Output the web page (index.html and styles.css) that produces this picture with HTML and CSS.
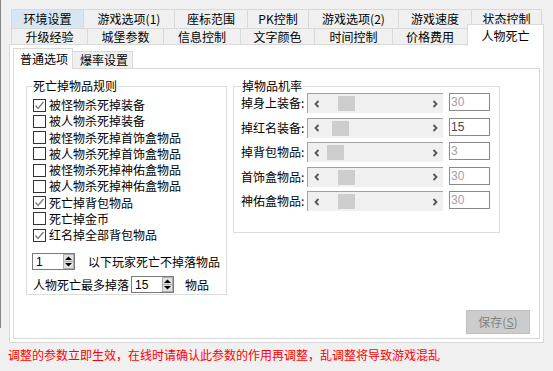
FILE: index.html
```html
<!DOCTYPE html>
<html lang="zh-CN">
<head>
<meta charset="utf-8">
<title>人物死亡</title>
<link rel="stylesheet" href="styles.css">
</head>
<body>
<div class="page">
  <div class="tabrow r1">
    <div class="tab hot w1">环境设置</div>
    <div class="tab w2">游戏选项(1)</div>
    <div class="tab w3">座标范围</div>
    <div class="tab w4">PK控制</div>
    <div class="tab w5">游戏选项(2)</div>
    <div class="tab w6">游戏速度</div>
    <div class="tab w7">状态控制</div>
  </div>
  <div class="tabrow r2">
    <div class="tab v1">升级经验</div>
    <div class="tab v2">城堡参数</div>
    <div class="tab v3">信息控制</div>
    <div class="tab v4">文字颜色</div>
    <div class="tab v5">时间控制</div>
    <div class="tab v6">价格费用</div>
    <div class="tab sel v7">人物死亡</div>
  </div>
  <div class="panel">
    <div class="subtabs">
      <div class="stab ssel">普通选项</div>
      <div class="stab">爆率设置</div>
    </div>
    <div class="inner">
      <div class="groups">
        <fieldset class="group g1">
          <legend>死亡掉物品规则</legend>
          <div class="chk"><span class="box on"><svg viewBox="0 0 11 11" width="11" height="11"><polyline points="1.5,5.5 4,8.5 9.5,2" fill="none" stroke="#7a7a7a" stroke-width="1.3"/></svg></span>被怪物杀死掉装备</div>
          <div class="chk"><span class="box"></span>被人物杀死掉装备</div>
          <div class="chk"><span class="box"></span>被怪物杀死掉首饰盒物品</div>
          <div class="chk"><span class="box"></span>被人物杀死掉首饰盒物品</div>
          <div class="chk"><span class="box"></span>被怪物杀死掉神佑盒物品</div>
          <div class="chk"><span class="box"></span>被人物杀死掉神佑盒物品</div>
          <div class="chk"><span class="box on"><svg viewBox="0 0 11 11" width="11" height="11"><polyline points="1.5,5.5 4,8.5 9.5,2" fill="none" stroke="#7a7a7a" stroke-width="1.3"/></svg></span>死亡掉背包物品</div>
          <div class="chk"><span class="box"></span>死亡掉金币</div>
          <div class="chk"><span class="box on"><svg viewBox="0 0 11 11" width="11" height="11"><polyline points="1.5,5.5 4,8.5 9.5,2" fill="none" stroke="#7a7a7a" stroke-width="1.3"/></svg></span>红名掉全部背包物品</div>
          <div class="spinrow row-a">
            <span class="spin s1"><span class="val">1</span><svg class="updown" viewBox="0 0 11 15" width="11" height="15"><rect x="0.5" y="0.5" width="10" height="14" fill="#e1e1e1" stroke="#adadad"/><line x1="1" y1="7.5" x2="10" y2="7.5" stroke="#adadad"/><polygon points="2,6 9,6 5.5,2.5" fill="#000"/><polygon points="2,9 9,9 5.5,12.5" fill="#000"/></svg></span>
            <span>以下玩家死亡不掉落物品</span>
          </div>
          <div class="spinrow row-b">
            <span>人物死亡最多掉落</span>
            <span class="spin s2"><span class="val">15</span><svg class="updown" viewBox="0 0 11 15" width="11" height="15"><rect x="0.5" y="0.5" width="10" height="14" fill="#e1e1e1" stroke="#adadad"/><line x1="1" y1="7.5" x2="10" y2="7.5" stroke="#adadad"/><polygon points="2,6 9,6 5.5,2.5" fill="#000"/><polygon points="2,9 9,9 5.5,12.5" fill="#000"/></svg></span>
            <span>物品</span>
          </div>
        </fieldset>
        <fieldset class="group g2">
          <legend>掉物品机率</legend>
          <div class="rate">
            <span class="lbl">掉身上装备:</span>
            <span class="scroll"><span class="arr"><svg viewBox="0 0 6 8" width="6" height="8"><polyline points="4.5,1 1.5,4 4.5,7" fill="none" stroke="#555" stroke-width="1.8"/></svg></span><span class="track"><span class="thumb" style="left:13px"></span></span><span class="arr"><svg viewBox="0 0 6 8" width="6" height="8"><polyline points="1.5,1 4.5,4 1.5,7" fill="none" stroke="#555" stroke-width="1.8"/></svg></span></span>
            <span class="edit">30</span>
          </div>
          <div class="rate">
            <span class="lbl">掉红名装备:</span>
            <span class="scroll"><span class="arr"><svg viewBox="0 0 6 8" width="6" height="8"><polyline points="4.5,1 1.5,4 4.5,7" fill="none" stroke="#555" stroke-width="1.8"/></svg></span><span class="track"><span class="thumb" style="left:7px"></span></span><span class="arr"><svg viewBox="0 0 6 8" width="6" height="8"><polyline points="1.5,1 4.5,4 1.5,7" fill="none" stroke="#555" stroke-width="1.8"/></svg></span></span>
            <span class="edit dark">15</span>
          </div>
          <div class="rate">
            <span class="lbl">掉背包物品:</span>
            <span class="scroll"><span class="arr"><svg viewBox="0 0 6 8" width="6" height="8"><polyline points="4.5,1 1.5,4 4.5,7" fill="none" stroke="#555" stroke-width="1.8"/></svg></span><span class="track"><span class="thumb" style="left:2px"></span></span><span class="arr"><svg viewBox="0 0 6 8" width="6" height="8"><polyline points="1.5,1 4.5,4 1.5,7" fill="none" stroke="#555" stroke-width="1.8"/></svg></span></span>
            <span class="edit">3</span>
          </div>
          <div class="rate">
            <span class="lbl">首饰盒物品:</span>
            <span class="scroll"><span class="arr"><svg viewBox="0 0 6 8" width="6" height="8"><polyline points="4.5,1 1.5,4 4.5,7" fill="none" stroke="#555" stroke-width="1.8"/></svg></span><span class="track"><span class="thumb" style="left:13px"></span></span><span class="arr"><svg viewBox="0 0 6 8" width="6" height="8"><polyline points="1.5,1 4.5,4 1.5,7" fill="none" stroke="#555" stroke-width="1.8"/></svg></span></span>
            <span class="edit">30</span>
          </div>
          <div class="rate">
            <span class="lbl">神佑盒物品:</span>
            <span class="scroll"><span class="arr"><svg viewBox="0 0 6 8" width="6" height="8"><polyline points="4.5,1 1.5,4 4.5,7" fill="none" stroke="#555" stroke-width="1.8"/></svg></span><span class="track"><span class="thumb" style="left:13px"></span></span><span class="arr"><svg viewBox="0 0 6 8" width="6" height="8"><polyline points="1.5,1 4.5,4 1.5,7" fill="none" stroke="#555" stroke-width="1.8"/></svg></span></span>
            <span class="edit">30</span>
          </div>
        </fieldset>
      </div>
      <div class="actions">
        <button class="save" type="button" disabled>保存(<u>S</u>)</button>
      </div>
    </div>
  </div>
  <p class="note">调整的参数立即生效，在线时请确认此参数的作用再调整，乱调整将导致游戏混乱</p>
</div>
</body>
</html>
```

FILE: styles.css
```css
* { box-sizing: border-box; }

html, body {
  margin: 0;
  padding: 0;
}

body {
  background: #f0f0f0;
  color: #000;
  font-family: "Noto Sans CJK SC", "Noto Sans", sans-serif;
  font-size: 12px;
  line-height: 14px;
}

.page {
  width: 553px;
  height: 371px;
  overflow: hidden;
  padding-top: 9px;
  background: linear-gradient(#858585, #858585) 0 0 / 1px 328px no-repeat, #f0f0f0;
}

/* ---------- main tabs ---------- */
.tabrow {
  display: flex;
  align-items: flex-start;
  margin-left: 11px;
}

.tab {
  display: flex;
  align-items: center;
  justify-content: center;
  border: 1px solid #d9d9d9;
  border-bottom: none;
  background: #f0f0f0;
  margin-left: -1px;
  white-space: nowrap;
}
.tab:first-child { margin-left: 0; }

.r1 { height: 19px; }
.r1 .tab { height: 19px; }
.r2 { height: 16px; }
.r2 .tab { height: 16px; padding-top: 1px; }

.tab.hot { background: #d8e6f2; }

.tab.sel {
  position: relative;
  z-index: 2;
  height: 22px;
  margin-top: -4px;
  background: #fff;
  padding-top: 0;
}

.w1 { width: 73px; }
.w2 { width: 92px; }
.w3 { width: 74px; }
.w4 { width: 62px; }
.w5 { width: 91px; }
.w6 { width: 74px; }
.w7 { width: 71px; }

.v1 { width: 77px; }
.v2 { width: 77px; }
.v3 { width: 78px; }
.v4 { width: 75px; }
.v5 { width: 79px; }
.v6 { width: 76px; }
.v7 { width: 77px; }
.r2 .v7 { margin-left: -1px; }

/* ---------- outer panel ---------- */
.panel {
  margin-left: 9px;
  width: 535px;
  height: 299px;
  border: 1px solid #d9d9d9;
  background: #fff;
  padding: 3px;
}

.subtabs {
  display: flex;
  align-items: flex-start;
  height: 20px;
}

.stab {
  height: 17px;
  width: 61px;
  margin-top: 3px;
  margin-left: -1px;
  border: 1px solid #d9d9d9;
  border-bottom: none;
  background: #f0f0f0;
  display: flex;
  align-items: center;
  justify-content: center;
  padding-left: 3px;
}

.stab.ssel {
  position: relative;
  z-index: 2;
  width: 60px;
  height: 21px;
  margin-top: 0;
  margin-left: 0;
  background: #fff;
  padding-left: 2px;
  padding-bottom: 1px;
}

.inner {
  width: 527px;
  height: 271px;
  border: 1px solid #d9d9d9;
  background: #fff;
}

.groups {
  display: flex;
  align-items: flex-start;
  margin-top: 10px;
}

/* ---------- group boxes ---------- */
.group {
  margin: 0;
  min-width: 0;
  border: 1px solid #dcdcdc;
}

.group legend {
  padding: 0 1px;
  margin-left: -1px;
  line-height: 14px;
  height: 14px;
}

.g1 {
  width: 201px;
  margin-left: 12px;
  padding: 4px 0 1px 6px;
}

.g2 {
  width: 267px;
  margin-left: 6px;
  padding: 0 0 16px 7px;
}
.g2 legend { margin-left: 0; }

.chk {
  display: flex;
  align-items: center;
  height: 16.25px;
  white-space: nowrap;
}

.box {
  width: 13px;
  height: 13px;
  border: 1px solid #333;
  background: #fff;
  margin-right: 3px;
  display: flex;
  align-items: center;
  justify-content: center;
  flex: none;
}

.spinrow {
  display: flex;
  align-items: center;
  height: 17px;
  white-space: nowrap;
}
.spinrow.row-a { margin-top: 10px; margin-left: -1px; }
.spinrow.row-b { margin-top: 6px; }

.spin {
  width: 43px;
  height: 17px;
  border: 1px solid #7a7a7a;
  display: flex;
  align-items: center;
  justify-content: space-between;
  padding: 0 0 0 3px;
  font-family: "Liberation Sans", Arial, sans-serif;
  flex: none;
}
.spin .updown { display: block; }
.s1 { margin-right: 13px; }
.s2 { margin-left: 2px; margin-right: 11px; }

/* ---------- rate rows ---------- */
.rate {
  display: flex;
  align-items: flex-start;
  height: 20px;
  margin-bottom: 4.5px;
}

.lbl {
  width: 66px;
  height: 20px;
  display: flex;
  align-items: center;
  white-space: nowrap;
}

.scroll {
  width: 136px;
  height: 20px;
  border-top: 1px solid #a0a0a0;
  border-left: 1px solid #a0a0a0;
  background: #f0f0f0;
  display: flex;
  align-items: stretch;
}

.arr {
  width: 17px;
  display: flex;
  align-items: center;
  justify-content: center;
  flex: none;
}
.arr svg { display: block; }

.track {
  position: relative;
  flex: 1;
}

.thumb {
  position: absolute;
  top: 2px;
  width: 17px;
  height: 15px;
  background: #cdcdcd;
}

.edit {
  width: 41px;
  height: 18px;
  margin-left: 6px;
  border: 1px solid #8a8a8a;
  background: #fff;
  color: #a3a3a3;
  padding-left: 1px;
  display: flex;
  align-items: center;
  font-family: "Liberation Sans", Arial, sans-serif;
}
.edit.dark { color: #444; }

/* ---------- actions ---------- */
.actions {
  display: flex;
  justify-content: flex-end;
  margin-top: 15px;
  padding-right: 9px;
}

.save {
  width: 64px;
  height: 24px;
  margin: 0;
  padding: 0;
  border: 1px solid #bfbfbf;
  background: #cccccc;
  color: #838383;
  font: inherit;
  line-height: 14px;
}
.save u { text-decoration: underline; }

/* ---------- footer note ---------- */
.note {
  margin: 5px 0 0 8px;
  color: #ff0000;
  white-space: nowrap;
}
```
